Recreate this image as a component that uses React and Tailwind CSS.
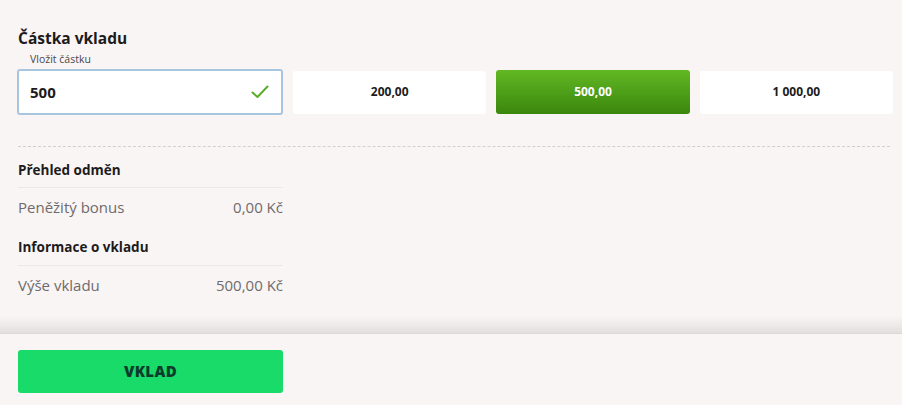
const amounts = ["200,00", "500,00", "1 000,00"];

const Row = ({ label, value }) => (
  <div className="flex justify-between items-center w-[265px] h-[40px] border-t border-[#ece8e8] text-[15px] text-[#6f6b6b]">
    <span>{label}</span>
    <span>{value}</span>
  </div>
);

export default function App() {
  const selected = "500,00";

  return (
    <div
      className="w-[902px] h-[405px] bg-[#f9f5f5] flex flex-col text-[#1d1b1b]"
      style={{ fontFamily: "'Open Sans', 'DejaVu Sans', sans-serif" }}
    >
      <div className="flex-1 px-[18px] pt-[27px]">
        <h2 className="text-[15.5px] font-bold leading-[22px]">Částka vkladu</h2>
        <div className="text-[10.5px] text-[#4b4848] leading-[14px] pl-[12px] mt-[3px]">Vložit částku</div>
        <div className="flex items-center gap-[10px] mt-[3px] -mr-[9px]">
          <div className="w-[266px] h-[46px] -ml-px bg-white border-2 border-[#a7c5de] rounded-[3px] flex items-center justify-between pl-[11px] pr-[12px]">
            <span className="text-[15px] font-bold">500</span>
            <svg width="18" height="14" viewBox="0 0 18 14" fill="none">
              <path d="M1.5 7.5l5 4.5L16.5 1.5" stroke="#5aad2a" strokeWidth="2" strokeLinecap="round" strokeLinejoin="round" />
            </svg>
          </div>
          {amounts.map((a) =>
            a === selected ? (
              <button
                key={a}
                className="flex-1 h-[44px] rounded-[3px] bg-gradient-to-b from-[#62b823] to-[#3a870d] text-white text-[12px] font-bold"
              >
                {a}
              </button>
            ) : (
              <button key={a} className="flex-1 h-[43px] rounded-[3px] bg-white text-[12px] font-bold">
                {a}
              </button>
            )
          )}
        </div>

        <div className="border-t border-dashed border-[#d3cfcf] mt-[31px] -mr-[6px]" />

        <div className="mt-[4px]">
          <div className="text-[13.5px] font-bold h-[36px] leading-[20px] pt-[9px]">Přehled odměn</div>
          <Row label="Peněžitý bonus" value="0,00 Kč" />
          <div className="text-[13.5px] font-bold h-[38px] leading-[20px] pt-[10px]">Informace o vkladu</div>
          <Row label="Výše vkladu" value="500,00 Kč" />
        </div>
      </div>

      <div className="h-[18px] bg-gradient-to-b from-[#f9f5f5] to-[#e3dfdf] border-b border-[#dcd8d8]" />
      <div className="h-[71px] px-[18px] pt-[16px]">
        <button className="w-[265px] h-[43px] rounded-[3px] bg-[#18db6a] text-[#0d3b2c] text-[15px] font-extrabold tracking-wide">
          VKLAD
        </button>
      </div>
    </div>
  );
}
